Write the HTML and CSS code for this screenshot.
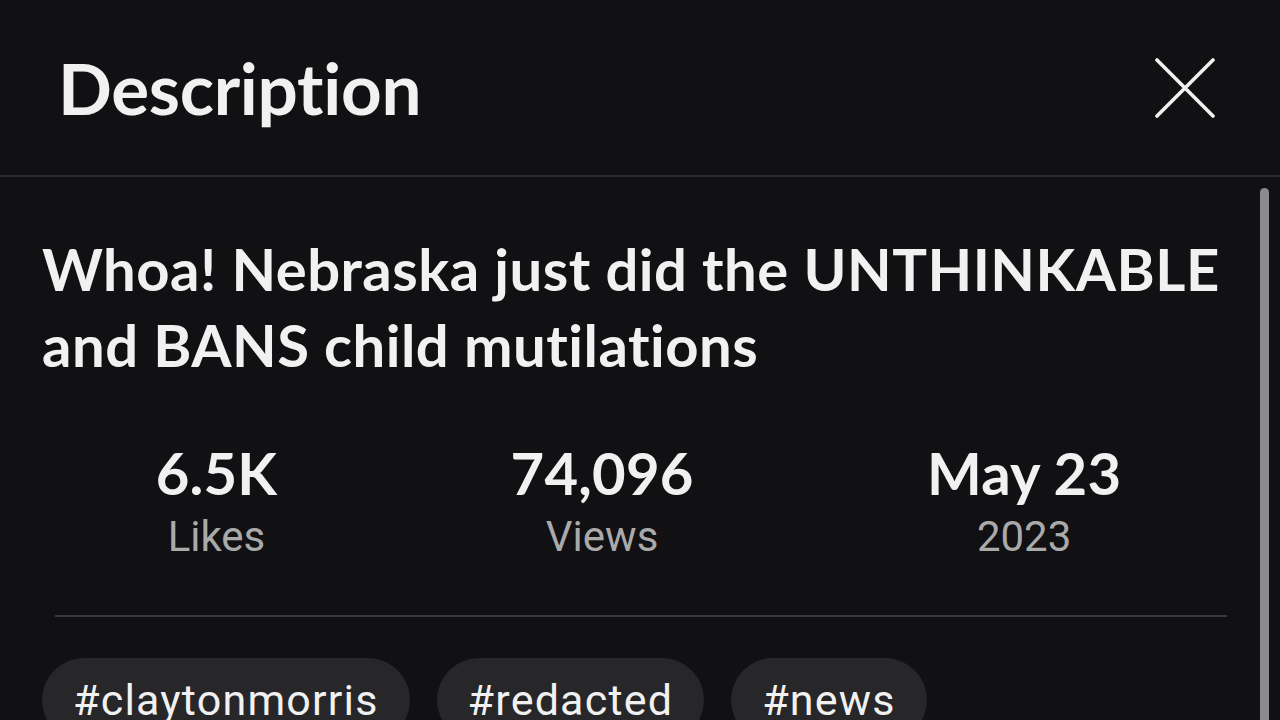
FILE: index.html
```html
<!DOCTYPE html>
<html lang="en">
<head>
<meta charset="utf-8">
<title>Description</title>
<link rel="stylesheet" href="styles.css">
</head>
<body>
<div class="sheet">
  <header class="head">
    <h1 class="head-title">Description</h1>
    <button class="close" aria-label="Close">
      <svg viewBox="0 0 60 60" width="60" height="60"><path d="M2 2 L58 58 M58 2 L2 58" stroke="#f1f1f1" stroke-width="3.6" stroke-linecap="round" fill="none"/></svg>
    </button>
  </header>
  <div class="body">
    <div class="content">
      <h2 class="title">Whoa! Nebraska just did the UNTHINKABLE and BANS child mutilations</h2>
      <div class="factoids">
        <div class="factoid"><div class="val">6.5K</div><div class="lbl">Likes</div></div>
        <div class="factoid"><div class="val">74,096</div><div class="lbl">Views</div></div>
        <div class="factoid"><div class="val">May 23</div><div class="lbl">2023</div></div>
      </div>
      <div class="rule"></div>
      <div class="tags">
        <span class="chip">#claytonmorris</span>
        <span class="chip">#redacted</span>
        <span class="chip">#news</span>
      </div>
    </div>
    <div class="scrollbar"></div>
  </div>
</div>
</body>
</html>
```
FILE: styles.css
```css
html, body {
  margin: 0;
  padding: 0;
  background: #111013;
}
body {
  width: 1280px;
  height: 720px;
  overflow: hidden;
  color: #f1f1f1;
  font-family: Lato, "Open Sans", sans-serif;
}
.sheet {
  display: flex;
  flex-direction: column;
  height: 720px;
}
.head {
  height: 175px;
  border-bottom: 2px solid #2b2a2d;
  display: flex;
  align-items: center;
  justify-content: space-between;
  padding: 0 65px 0 58px;
  flex-shrink: 0;
}
.head-title {
  margin: 0;
  font-size: 71px;
  font-weight: 700;
  letter-spacing: -0.3px;
  line-height: 1;
  color: #f1f1f1;
}
.close {
  background: none;
  border: 0;
  padding: 0;
  width: 60px;
  height: 60px;
  display: block;
}
.close svg { display: block; }
.body {
  position: relative;
  flex: 1;
  overflow: hidden;
}
.content {
  padding: 0 58px 0 42px;
}
.title {
  margin: 54px -20px 0 0;
  font-size: 58px;
  line-height: 76px;
  font-weight: 700;
  letter-spacing: 0.5px;
  color: #f1f1f1;
}
.factoids {
  display: flex;
  justify-content: space-around;
  margin: 57px -16px 0 -3px;
}
.factoid {
  display: flex;
  flex-direction: column;
  align-items: center;
}
.val {
  font-size: 58px;
  line-height: 66px;
  font-weight: 700;
  letter-spacing: 0.2px;
}
.lbl {
  font-family: Roboto, sans-serif;
  font-size: 42px;
  line-height: 50px;
  margin-top: 6px;
  color: #aaaaaa;
}
.rule {
  height: 2px;
  background: #39383b;
  margin: 53px -5px 0 13px;
}
.tags {
  display: flex;
  gap: 27px;
  margin-top: 41px;
}
.chip {
  display: block;
  height: 84px;
  line-height: 84px;
  padding: 0 31px;
  border-radius: 42px;
  background: #272629;
  font-family: Roboto, sans-serif;
  font-size: 43px;
  letter-spacing: 1.2px;
  color: #f1f1f1;
  white-space: nowrap;
}
.scrollbar {
  position: absolute;
  left: 1260px;
  top: 11px;
  width: 9px;
  height: 600px;
  border-radius: 5px;
  background: #8b8a8d;
}
```
